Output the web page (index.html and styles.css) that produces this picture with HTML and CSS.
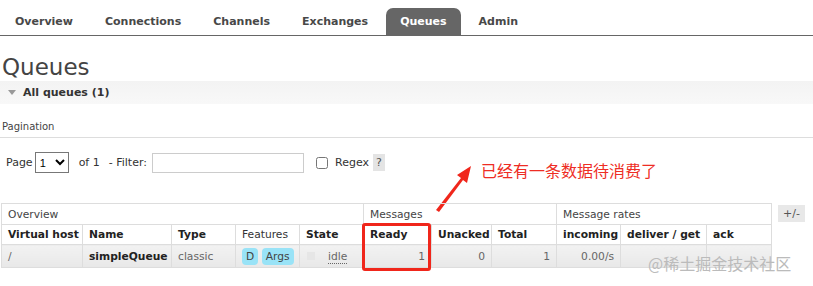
FILE: index.html
```html
<html lang="zh">

<head>
	<meta charset="UTF-8" />
	<meta name="viewport" content="width=device-width, initial-scale=1.0" />
	<title>Queues</title>
<link rel="stylesheet" href="styles.css">
</head>

<body>
	<nav class="menu">
		<a class="menu__item" href="#">Overview</a>
		<a class="menu__item" href="#">Connections</a>
		<a class="menu__item" href="#">Channels</a>
		<a class="menu__item" href="#">Exchanges</a>
		<a class="menu__item menu__item--active" href="#">Queues</a>
		<a class="menu__item" href="#">Admin</a>
	</nav>
	<main class="main">
		<h1 class="main__title">Queues</h1>
		<div class="section-head">
			<span class="section-head__arrow"></span>
			<span class="section-head__text">All queues (1)</span>
		</div>

		<h3 class="pagination-title">Pagination</h3>
		<div class="filter-row">
			<span>Page</span>
			<select class="filter-row__select"><option>1</option></select>
			<span class="filter-row__of">of 1</span>
			<span>- Filter:</span>
			<input class="filter-row__input" type="text">
			<label class="filter-row__regex"><input type="checkbox"> Regex</label>
			<span class="filter-row__help">?</span>
		</div>

		<div class="note">
			<svg class="note__arrow" width="60" height="60" viewBox="0 0 60 60">
				<path d="M2 46 L27 14 L23 11 L37 2 L33 19 L29 16 L5 48 Z" fill="#f0261b" />
			</svg>
			<span class="note__text">已经有一条数据待消费了</span>
		</div>

		<div class="table-wrap">
			<table class="queues">
				<colgroup>
					<col class="col-vhost">
					<col class="col-name">
					<col class="col-type">
					<col class="col-feat">
					<col class="col-state">
					<col class="col-ready">
					<col class="col-unacked">
					<col class="col-total">
					<col class="col-in">
					<col class="col-deliver">
					<col class="col-ack">
				</colgroup>
				<tr class="queues__groups">
					<th colspan="5">Overview</th>
					<th colspan="3">Messages</th>
					<th colspan="3">Message rates</th>
				</tr>
				<tr class="queues__head">
					<th>Virtual host</th>
					<th>Name</th>
					<th>Type</th>
					<th class="queues__light">Features</th>
					<th>State</th>
					<th>Ready</th>
					<th>Unacked</th>
					<th>Total</th>
					<th>incoming</th>
					<th>deliver / get</th>
					<th>ack</th>
				</tr>
				<tr class="queues__row">
					<td>/</td>
					<td class="queues__name">simpleQueue</td>
					<td>classic</td>
					<td><span class="tag">D</span> <span class="tag">Args</span></td>
					<td><span class="state-box"></span><abbr class="state-text">idle</abbr></td>
					<td class="num">1</td>
					<td class="num">0</td>
					<td class="num">1</td>
					<td class="num">0.00/s</td>
					<td></td>
					<td></td>
				</tr>
			</table>
			<span class="toggle">+/-</span>
			<span class="highlight"></span>
		</div>
		<span class="watermark">@稀土掘金技术社区</span>
	</main>
</body>

</html>
```

FILE: styles.css
```css
body{
  margin: 0;
  font-family: "DejaVu Sans", Verdana, sans-serif;
  font-size: 11px;
  color: #444;
  background: #fff;
}

.menu{
  display: flex;
  align-items: flex-end;
  height: 35px;
  padding-left: 1px;
  border-bottom: 1px solid #666;
}

.menu__item{
  display: block;
  padding: 7px 14px 7px 14px;
  margin-right: 4px;
  font-weight: bold;
  font-size: 11px;
  color: #484848;
  text-decoration: none;
  border-radius: 7px 7px 0 0;
}

.menu__item--active{
  background: #666;
  color: #fff;
}

.main{
  position: relative;
  padding-top: 17px;
}

.main__title{
  margin: 0 0 0 2px;
  font-size: 23px;
  font-weight: normal;
  line-height: 28px;
  color: #444;
}

.section-head{
  display: flex;
  align-items: center;
  height: 23px;
  background: linear-gradient(#f3f3f3, #f8f8f8);
}

.section-head__arrow{
  width: 0;
  height: 0;
  margin: 0 7px 0 8px;
  border-left: 4px solid transparent;
  border-right: 4px solid transparent;
  border-top: 5px solid #999;
}

.section-head__text{
  font-weight: bold;
  font-size: 11px;
  color: #333;
}

.pagination-title{
  margin: 17px 0 0 0;
  padding: 0 0 5px 2px;
  font-size: 10px;
  font-weight: normal;
  border-bottom: 1px solid #ddd;
}

.filter-row{
  display: flex;
  align-items: center;
  margin-top: 14px;
  padding-left: 6px;
  height: 21px;
  color: #333;
}

.filter-row__select{
  width: 34px;
  height: 21px;
  margin: 0 10px 0 2px;
  font-size: 11px;
  border: 1px solid #777;
  background: #fff;
}

.filter-row__of{
  margin-right: 9px;
}

.filter-row__input{
  width: 152px;
  height: 20px;
  margin: 0 12px 0 5px;
  padding: 0;
  box-sizing: border-box;
  border: 1px solid #ccc;
}

.filter-row__regex{
  display: flex;
  align-items: center;
}

.filter-row__regex input{
  margin: 0 7px 0 0;
  width: 12px;
  height: 12px;
}

.filter-row__help{
  margin-left: 4px;
  padding: 2px 3px;
  background: #e4e4e4;
  color: #555;
}

.note{
  position: absolute;
  left: 434px;
  top: 107px;
}

.note__arrow{
  position: absolute;
  left: 0;
  top: 21px;
}

.note__text{
  position: absolute;
  left: 47px;
  top: 15px;
  white-space: nowrap;
  font-family: "Noto Sans CJK SC", sans-serif;
  font-size: 16px;
  color: #ee2d24;
}

.table-wrap{
  position: relative;
  margin-top: 30px;
  padding-left: 1px;
  display: flex;
  align-items: flex-start;
}

.queues{
  border-collapse: collapse;
  table-layout: fixed;
  width: 770px;
  font-family: "DejaVu Sans", Verdana, sans-serif;
  font-size: 10.7px;
}

.col-vhost{ width: 81px; }
.col-name{ width: 89px; }
.col-type{ width: 64px; }
.col-feat{ width: 64px; }
.col-state{ width: 64px; }
.col-ready{ width: 68px; }
.col-unacked{ width: 60px; }
.col-total{ width: 65px; }
.col-in{ width: 64px; }
.col-deliver{ width: 86px; }
.col-ack{ width: 65px; }

.queues th,
.queues td{
  border: 1px solid #ddd;
  padding: 0 6px;
  text-align: left;
  white-space: nowrap;
  overflow: hidden;
}

.queues__groups th{
  height: 21px;
  font-weight: normal;
  color: #444;
}

.queues__head th{
  height: 20px;
  font-weight: bold;
  color: #222;
}

.queues__head th.queues__light{
  font-weight: normal;
  color: #333;
}

.queues__row td{
  height: 23px;
  background: linear-gradient(#f2f2f2, #e8e8e8);
  color: #666;
}

.queues__row td.queues__name{
  font-weight: bold;
  color: #222;
}

.queues td.num{
  text-align: right;
}

.tag{
  display: inline-block;
  padding: 2px 4px;
  background: #99e3f7;
  border-radius: 4px;
  color: #444;
}

.state-box{
  display: inline-block;
  width: 8px;
  height: 8px;
  margin: 0 13px 0 1px;
  background: #e6e6e6;
}

.state-text{
  text-decoration: none;
  border-bottom: 1px dotted #666;
}

.toggle{
  margin: 2px 0 0 6px;
  padding: 2px 5px;
  background: #e8e8e8;
  color: #555;
}

.highlight{
  position: absolute;
  left: 362px;
  top: 20px;
  width: 63px;
  height: 42px;
  border: 3px solid #f0261b;
  border-radius: 3px;
}

.watermark{
  position: absolute;
  left: 648px;
  top: 215px;
  font-family: "Noto Sans CJK SC", sans-serif;
  font-size: 16px;
  color: #bbb;
}
```
